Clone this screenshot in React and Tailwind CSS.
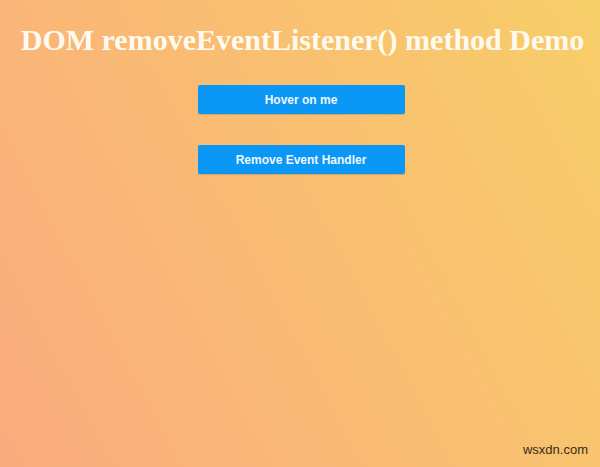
import React from "react";

const App = () => {
  return (
    <div className="relative min-h-[467px] w-full bg-[#fbab7e] bg-[linear-gradient(62deg,#fbab7e_0%,#f7ce68_100%)] flex flex-col items-center">
      <h1
        className="mt-[21px] pl-[5px] text-[30px] leading-[37px] font-bold text-[#fffaf0] text-center whitespace-nowrap"
        style={{ fontFamily: '"Liberation Serif", serif' }}
      >
        DOM removeEventListener() method Demo
      </h1>
      <div
        className="mt-[27px] flex flex-col items-center gap-[31px] pl-[2px]"
        style={{ fontFamily: '"Liberation Sans", Arial, sans-serif' }}
      >
        <button className="w-[207px] h-[29px] bg-[#0a97f5] text-[#eef6ff] text-[12px] font-bold rounded-[2px] shadow-[0_1px_1px_rgba(0,0,0,0.15)]">
          Hover on me
        </button>
        <button className="w-[207px] h-[29px] bg-[#0a97f5] text-[#eef6ff] text-[12px] font-bold rounded-[2px] shadow-[0_1px_1px_rgba(0,0,0,0.15)]">
          Remove Event Handler
        </button>
      </div>
      <span
        className="absolute right-[12px] bottom-[8px] text-[13px] text-[#3a2a1a]"
        style={{ fontFamily: '"Liberation Sans", Arial, sans-serif' }}
      >
        wsxdn.com
      </span>
    </div>
  );
};

export default App;
